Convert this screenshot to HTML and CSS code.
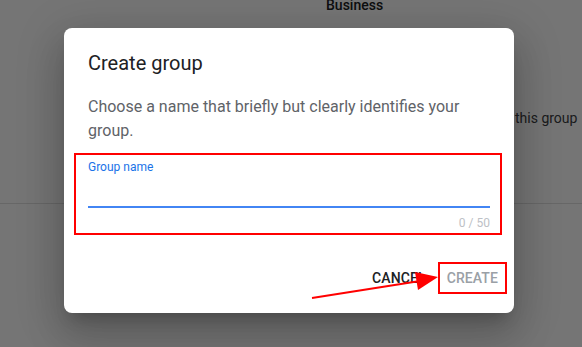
FILE: index.html
```html
<!DOCTYPE html>
<html>
<head>
<meta charset="utf-8">
<link rel="stylesheet" href="styles.css">
</head>
<body>
<div class="page">
  <div class="page-head"><span class="col-title">Business</span></div>
  <div class="page-row"><span class="row-text">this group</span></div>
  <div class="page-rest"></div>
</div>
<div class="scrim"></div>
<div class="dialog">
  <h1 class="title">Create group</h1>
  <p class="desc">Choose a name that briefly but clearly identifies your group.</p>
  <div class="field-mark">
    <label class="label">Group name</label>
    <div class="input"></div>
    <div class="counter">0 / 50</div>
  </div>
  <div class="actions">
    <span class="btn cancel">CANCEL</span>
    <span class="btn create">CREATE</span>
  </div>
</div>
<svg class="arrow" width="582" height="347" viewBox="0 0 582 347">
  <line x1="312" y1="298" x2="420" y2="281" stroke="#ff0000" stroke-width="2"/>
  <polygon points="438,277 415,272 418,290" fill="#ff0000"/>
</svg>
</body>
</html>
```
FILE: styles.css
```css
html, body {
  margin: 0;
  padding: 0;
  width: 582px;
  height: 347px;
  overflow: hidden;
  font-family: Roboto, "Liberation Sans", sans-serif;
}
.page {
  width: 582px;
  height: 347px;
  background: #ffffff;
  display: flex;
  flex-direction: column;
}
.page-head {
  height: 20px;
  display: flex;
  align-items: flex-end;
  padding-left: 326px;
  margin-top: -7px;
}
.col-title {
  font-size: 14px;
  font-weight: 500;
  color: #202124;
}
.page-row {
  height: 191px;
  border-bottom: 1px solid #e0e0e0;
  display: flex;
  align-items: flex-start;
  padding-left: 515px;
  padding-top: 97px;
  box-sizing: border-box;
}
.row-text {
  font-size: 14px;
  color: #3c4043;
  white-space: nowrap;
}
.scrim {
  position: absolute;
  inset: 0;
  background: rgba(0, 0, 0, 0.54);
}
.dialog {
  position: absolute;
  left: 64px;
  top: 28px;
  width: 450px;
  height: 285px;
  box-sizing: border-box;
  background: #ffffff;
  border-radius: 8px;
  box-shadow: 0 11px 15px -7px rgba(0,0,0,0.2), 0 24px 38px 3px rgba(0,0,0,0.14), 0 9px 46px 8px rgba(0,0,0,0.12);
  padding: 21px 24px 0 24px;
  display: flex;
  flex-direction: column;
}
.title {
  margin: 0;
  font-size: 20px;
  font-weight: 400;
  line-height: 28px;
  color: #202124;
}
.desc {
  margin: 18px 0 0 0;
  font-size: 16px;
  line-height: 24px;
  color: #5f6368;
}
.field-mark {
  margin: 10px 0 0 -14px;
  width: 428px;
  height: 82px;
  box-sizing: border-box;
  border: 2px solid #ff0000;
  padding: 4px 10px 0 12px;
  display: flex;
  flex-direction: column;
}
.label {
  font-size: 12px;
  line-height: 16px;
  color: #1a73e8;
}
.input {
  margin-top: 31px;
  height: 2px;
  background: #4285f4;
}
.counter {
  margin-top: 7px;
  align-self: flex-end;
  font-size: 12px;
  line-height: 16px;
  color: #bdc1c6;
}
.actions {
  margin-top: 27px;
  margin-right: -17px;
  display: flex;
  justify-content: flex-end;
  align-items: center;
  gap: 12px;
}
.btn {
  font-size: 14px;
  font-weight: 500;
  line-height: 20px;
  letter-spacing: 0.1px;
}
.cancel {
  color: #202124;
}
.create {
  color: #9aa0a6;
  border: 2px solid #ff0000;
  padding: 4px 7px;
}
.arrow {
  position: absolute;
  left: 0;
  top: 0;
}
```
